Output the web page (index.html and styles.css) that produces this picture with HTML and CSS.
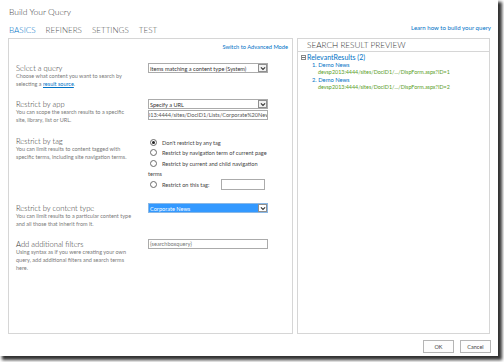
FILE: index.html
```html
<!doctype html>
<html>
  <head>
    <meta charset="utf-8" />
    <link rel="stylesheet" href="styles.css">
  </head>
  <body>
    <div class="dialog">
      <div class="title">Build Your Query</div>

      <div class="tabbar">
        <div class="tabs">
          <span class="tab active">BASICS</span>
          <span class="tab">REFINERS</span>
          <span class="tab">SETTINGS</span>
          <span class="tab">TEST</span>
        </div>
        <a class="link help-link">Learn how to build your query</a>
      </div>

      <div class="panels">
        <div class="panel form-panel">
          <div class="advanced"><a class="link">Switch to Advanced Mode</a></div>

          <div class="field field-query">
            <div class="field-info">
              <div class="field-label">Select a query</div>
              <div class="field-desc">Choose what content you want to search by<br>selecting a <a class="desc-link">result source</a>.</div>
            </div>
            <div class="field-controls">
              <div class="select">
                <span class="select-text">Items matching a content type (System)</span>
                <span class="select-arrow">
                  <svg viewBox="0 0 8 6"><path d="M1.2 1.4l2.8 2.8 2.8-2.8" fill="none" stroke="#333" stroke-width="1.5" /></svg>
                </span>
              </div>
            </div>
          </div>

          <div class="field field-app">
            <div class="field-info">
              <div class="field-label">Restrict by app</div>
              <div class="field-desc">You can scope the search results to a specific<br>site, library, list or URL.</div>
            </div>
            <div class="field-controls">
              <div class="select">
                <span class="select-text">Specify a URL</span>
                <span class="select-arrow">
                  <svg viewBox="0 0 8 6"><path d="M1.2 1.4l2.8 2.8 2.8-2.8" fill="none" stroke="#333" stroke-width="1.5" /></svg>
                </span>
              </div>
              <div class="textbox">013:4444/sites/DocID1/Lists/Corporate%20News</div>
            </div>
          </div>

          <div class="field field-tag">
            <div class="field-info">
              <div class="field-label">Restrict by tag</div>
              <div class="field-desc">You can limit results to content tagged with<br>specific terms, including site navigation terms.</div>
            </div>
            <div class="field-controls radios">
              <div class="radio-row"><span class="radio checked"></span>Don't restrict by any tag</div>
              <div class="radio-row"><span class="radio"></span>Restrict by navigation term of current page</div>
              <div class="radio-row"><span class="radio"></span>Restrict by current and child navigation</div>
              <div class="radio-cont">terms</div>
              <div class="radio-row"><span class="radio"></span>Restrict on this tag:<span class="tag-box"></span></div>
            </div>
          </div>

          <div class="field field-type">
            <div class="field-info">
              <div class="field-label">Restrict by content type</div>
              <div class="field-desc">You can limit results to a particular content type<br>and all those that inherit from it.</div>
            </div>
            <div class="field-controls">
              <div class="select selected">
                <span class="select-text">Corporate News</span>
                <span class="select-arrow">
                  <svg viewBox="0 0 8 6"><path d="M1.2 1.4l2.8 2.8 2.8-2.8" fill="none" stroke="#333" stroke-width="1.5" /></svg>
                </span>
              </div>
            </div>
          </div>

          <div class="field field-filters">
            <div class="field-info">
              <div class="field-label">Add additional filters</div>
              <div class="field-desc">Using syntax as if you were creating your own<br>query, add additional filters and search terms<br>here.</div>
            </div>
            <div class="field-controls">
              <div class="textbox muted">{searchboxquery}</div>
            </div>
          </div>
        </div>

        <div class="panel preview-panel">
          <div class="preview-title">SEARCH RESULT PREVIEW</div>
          <div class="tree">
            <div class="tree-root"><span class="collapse"></span>RelevantResults (2)</div>
            <div class="result">
              <div class="result-title">1. Demo News</div>
              <div class="result-url">devsp2013:4444/sites/DocID1/.../DispForm.aspx?ID=1</div>
            </div>
            <div class="result">
              <div class="result-title">2. Demo News</div>
              <div class="result-url">devsp2013:4444/sites/DocID1/.../DispForm.aspx?ID=2</div>
            </div>
          </div>
        </div>
      </div>

      <div class="footer">
        <button class="button">OK</button>
        <button class="button">Cancel</button>
      </div>
    </div>
  </body>
</html>
```

FILE: styles.css
```css
* {
  box-sizing: border-box;
}

body {
  margin: 0;
  width: 504px;
  height: 362px;
  background: #fff;
  font-family: 'Lato', 'Liberation Sans', sans-serif;
  color: #444;
  overflow: hidden;
}

.dialog {
  width: 498px;
  height: 356px;
  background: #fff;
  box-shadow: 3px 3px 3px 1px rgba(0, 0, 0, 0.8);
  padding: 0 7px 0 8px;
}

.link {
  color: #0072c6;
  text-decoration: none;
}

/* Header */
.title {
  padding: 7px 0 0 1px;
  height: 24px;
  font-size: 8.5px;
  font-weight: 300;
  line-height: 10px;
  color: #444;
}

.tabbar {
  display: flex;
  justify-content: space-between;
  align-items: flex-start;
  height: 14px;
}

.tabs {
  display: flex;
  gap: 10px;
  padding-left: 1px;
}

.tab {
  font-size: 8.1px;
  font-weight: 300;
  line-height: 12px;
  color: #555;
}

.tab.active {
  color: #0072c6;
}

.help-link {
  font-size: 6.1px;
  line-height: 8px;
  margin-right: 0;
}

/* Panels */
.panels {
  display: flex;
  gap: 4px;
  height: 296px;
}

.panel {
  border: 1px solid #d6d6d6;
  height: 100%;
}

.form-panel {
  width: 285px;
  padding: 0 4px 0 7px;
}

.preview-panel {
  width: 193px;
}

.advanced {
  text-align: right;
  font-size: 5.7px;
  line-height: 8px;
  padding-top: 4px;
  height: 24px;
}

/* Fields */
.field {
  display: flex;
  align-items: flex-start;
}

.field-info {
  width: 132px;
  padding-top: 1px;
}

.field-label {
  font-size: 7.6px;
  font-weight: 300;
  line-height: 8px;
  color: #333;
}

.field-desc {
  font-size: 5.5px;
  line-height: 8px;
  color: #7a7a7a;
  white-space: nowrap;
}

.desc-link {
  color: #0072c6;
  text-decoration: underline;
}

.field-controls {
  width: 120px;
  display: flex;
  flex-direction: column;
  gap: 1px;
}

.field-query {
  height: 36px;
}

.field-app {
  height: 37px;
}

.field-tag {
  height: 67px;
}

.field-type {
  height: 36px;
}

.select {
  display: flex;
  align-items: center;
  height: 10px;
  border: 1px solid #ababab;
  background: #fff;
  font-size: 5.6px;
  color: #333;
}

.select-text {
  flex: 1;
  padding-left: 1px;
  white-space: nowrap;
  overflow: hidden;
}

.select-arrow {
  width: 9px;
  height: 8px;
  border: 1px solid #8f8f8f;
  display: flex;
  align-items: center;
  justify-content: center;
  background: #f2f2f2;
}

.select-arrow svg {
  width: 6px;
  height: 5px;
}

.select.selected {
  background: #3399ff;
  border-color: #8ab8e6;
  color: #fff;
}

.select.selected .select-arrow {
  background: #fff;
}

.textbox {
  height: 10px;
  border: 1px solid #ababab;
  font-size: 5.6px;
  line-height: 8px;
  padding-left: 0;
  white-space: nowrap;
  overflow: hidden;
  text-indent: -2px;
  color: #555;
}

.textbox.muted {
  color: #777;
  text-indent: 1px;
}

/* Radios */
.radios {
  padding-top: 1px;
  gap: 0;
}

.radio-row {
  display: flex;
  align-items: center;
  font-size: 5.6px;
  height: 10.5px;
  color: #444;
}

.radio {
  width: 7px;
  height: 7px;
  border: 1px solid #6a6a6a;
  border-radius: 50%;
  margin: 0 5px 0 2px;
  display: flex;
  align-items: center;
  justify-content: center;
  background: #fff;
}

.radio.checked::after {
  content: '';
  width: 3px;
  height: 3px;
  border-radius: 50%;
  background: #222;
}

.radio-cont {
  font-size: 5.6px;
  height: 10.5px;
  line-height: 10.5px;
  color: #444;
}

.tag-box {
  width: 44px;
  height: 11px;
  border: 1px solid #ababab;
  margin-left: auto;
  margin-right: 3px;
}

/* Preview */
.preview-title {
  font-size: 8.2px;
  font-weight: 300;
  line-height: 12px;
  padding-left: 9px;
  height: 13px;
  border-bottom: 1px solid #d6d6d6;
  color: #333;
}

.tree {
  padding: 1px 0 0 3px;
  font-size: 5.4px;
  line-height: 7.5px;
}

.tree-root {
  display: flex;
  align-items: center;
  font-size: 7px;
  line-height: 8px;
  color: #0072c6;
}

.collapse {
  width: 5px;
  height: 5px;
  border: 1px solid #888;
  margin-right: 1px;
  background: linear-gradient(#777, #777) center / 3px 1px no-repeat;
}

.result {
  padding-left: 11px;
}

.result-title {
  font-size: 5.8px;
  color: #0072c6;
}

.result-url {
  padding-left: 6px;
  color: #5a9e1f;
}

/* Footer */
.footer {
  display: flex;
  justify-content: flex-end;
  gap: 6px;
  padding: 6px 0 0;
}

.button {
  width: 31px;
  height: 13px;
  padding: 0;
  border: 1px solid #b5b5b5;
  background: #fdfdfd;
  font-family: inherit;
  font-size: 5.5px;
  color: #444;
}
```
